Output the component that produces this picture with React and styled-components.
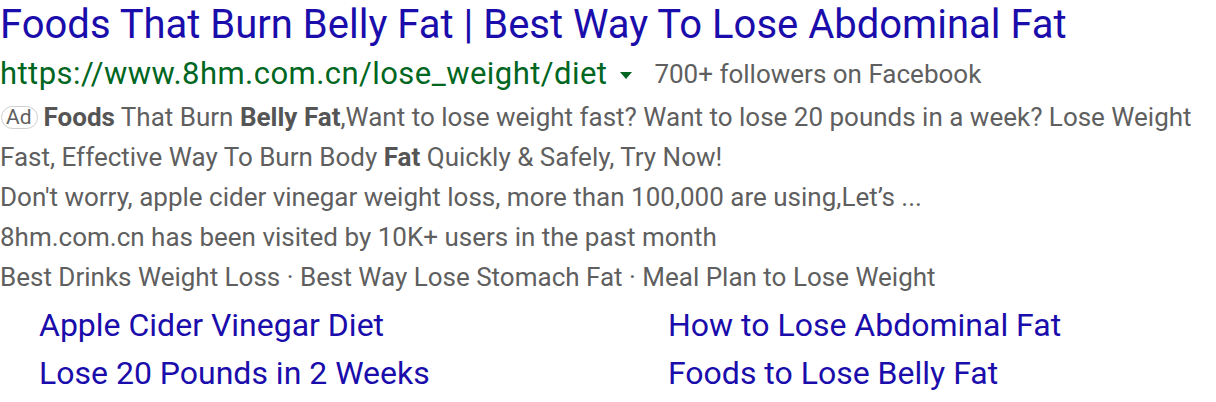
import React from "react";
import styled, { createGlobalStyle } from "styled-components";

const Global = createGlobalStyle`
  html, body { margin: 0; padding: 0; background: #fff; }
  body { font-family: Roboto, Arial, sans-serif; }
`;

const Result = styled.div`
  padding: 0;
  width: 1216px;
  box-sizing: border-box;
`;

const Title = styled.a`
  display: block;
  color: #1a0dab;
  font-size: 40px;
  line-height: 50px;
  text-decoration: none;
  white-space: nowrap;
`;

const UrlRow = styled.div`
  display: flex;
  align-items: center;
  height: 47px;
  white-space: nowrap;
`;

const Url = styled.span`
  color: #006621;
  font-size: 31px;
  letter-spacing: 0.45px;
`;

const Caret = styled.span`
  display: inline-block;
  width: 0;
  height: 0;
  margin: 3px 22px 0 13px;
  border-left: 6px solid transparent;
  border-right: 6px solid transparent;
  border-top: 7px solid #006621;
`;

const Meta = styled.span`
  color: #5f5f5f;
  font-size: 26px;
`;

const Snippet = styled.div`
  color: #5f5f5f;
  font-size: 26px;
  line-height: 40px;
  width: 1200px;
`;

const Strong = styled.b`
  font-weight: 700;
  color: #555;
`;

const Line = styled.div`
  white-space: nowrap;
`;

const AdBadge = styled.span`
  display: inline-block;
  box-sizing: border-box;
  border: 1px solid #cfcfcf;
  border-radius: 12px;
  font-size: 21px;
  line-height: 21px;
  padding: 0 5px 0 4px;
  margin: 0 6px 0 1px;
  vertical-align: 2px;
  color: #5f5f5f;
`;

const Sitelinks = styled.div`
  display: grid;
  grid-template-columns: 629px 1fr;
  padding: 4px 0 0 39px;
`;

const Sitelink = styled.a`
  color: #1a0dab;
  font-size: 32px;
  line-height: 48px;
  text-decoration: none;
  white-space: nowrap;
`;

export default function App() {
  return (
    <>
      <Global />
      <Result>
        <Title href="#">Foods That Burn Belly Fat | Best Way To Lose Abdominal Fat</Title>
        <UrlRow>
          <Url>https://www.8hm.com.cn/lose_weight/diet</Url>
          <Caret />
          <Meta>700+ followers on Facebook</Meta>
        </UrlRow>
        <Snippet>
          <div>
            <AdBadge>Ad</AdBadge>
            <Strong>Foods</Strong> That Burn <Strong>Belly Fat</Strong>,Want to lose weight fast? Want to lose 20 pounds in a week? Lose Weight Fast, Effective Way To Burn Body <Strong>Fat</Strong> Quickly &amp; Safely, Try Now!
          </div>
          <Line>Don't worry, apple cider vinegar weight loss, more than 100,000 are using,Let’s ...</Line>
          <Line>8hm.com.cn has been visited by 10K+ users in the past month</Line>
          <Line>Best Drinks Weight Loss · Best Way Lose Stomach Fat · Meal Plan to Lose Weight</Line>
        </Snippet>
        <Sitelinks>
          <Sitelink href="#">Apple Cider Vinegar Diet</Sitelink>
          <Sitelink href="#">How to Lose Abdominal Fat</Sitelink>
          <Sitelink href="#">Lose 20 Pounds in 2 Weeks</Sitelink>
          <Sitelink href="#">Foods to Lose Belly Fat</Sitelink>
        </Sitelinks>
      </Result>
    </>
  );
}
